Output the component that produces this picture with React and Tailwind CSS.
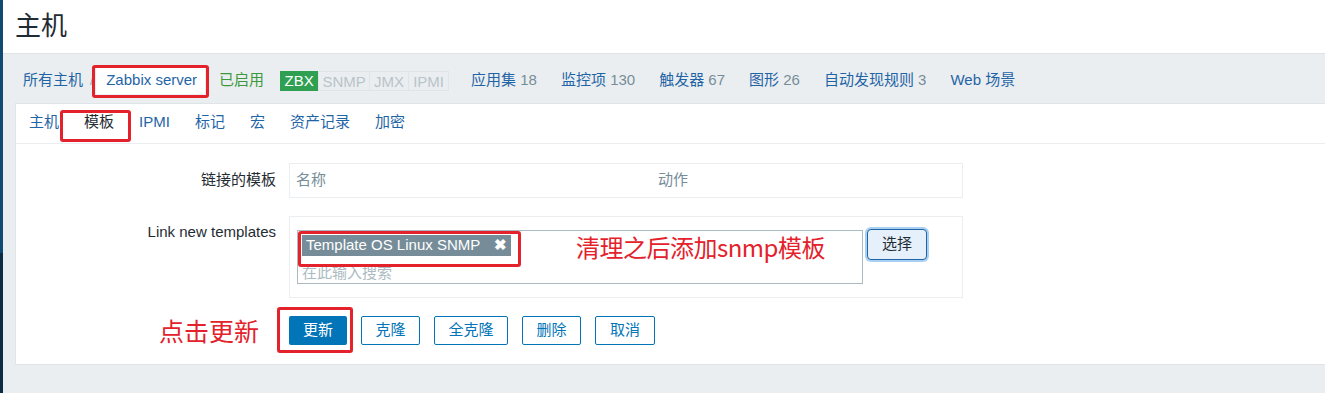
import React from "react";

const FONT = { fontFamily: '"Liberation Sans", Arial, "Noto Sans CJK SC", sans-serif' };

const counts = [
  { label: "应用集", n: "18" },
  { label: "监控项", n: "130" },
  { label: "触发器", n: "67" },
  { label: "图形", n: "26" },
  { label: "自动发现规则", n: "3" },
  { label: "Web 场景", n: null },
];

const tabs = ["主机", "模板", "IPMI", "标记", "宏", "资产记录", "加密"];

const RedBox = ({ className }) => (
  <div className={`absolute border-[3px] border-[#e3222b] rounded-[3px] pointer-events-none ${className}`} />
);

export default function App() {
  return (
    <div className="relative flex min-h-[393px] bg-[#ebeef0] text-[15px] overflow-hidden" style={FONT}>
      {/* sidebar edge */}
      <div className="w-[3px] flex flex-col shrink-0">
        <div className="h-[253px] bg-[#0f4a73]"></div>
        <div className="flex-1 bg-[#0b2c43]"></div>
      </div>

      <div className="flex-1 flex flex-col">
        {/* HEADER */}
        <div className="h-[54px] bg-white border-b border-[#dfe4e7] pl-3 flex items-center">
          <h1 className="text-[26px] leading-none text-[#1f2c33] pb-[2px]">主机</h1>
        </div>

        {/* BREADCRUMB */}
        <div className="h-[49px] pl-[20px] pt-[4px] flex items-center whitespace-nowrap">
          <span className="text-[#1f65a6]">所有主机</span>
          <span className="text-[#9aabb5] ml-[7px] mr-[2px]">/</span>
          <span className="bg-white text-[#1f65a6] h-[27px] pl-[10px] pr-[8px] flex items-center">Zabbix server</span>
          <span className="text-[#3c9a3c] ml-[14px]">已启用</span>
          <div className="flex ml-[16px] h-[20px] text-[15px] leading-[20px]">
            <span className="w-[38px] text-center bg-[#2f9f52] text-white">ZBX</span>
            <span className="w-[52px] text-center border border-[#dfe4e7] text-[#b8c4ca]">SNMP</span>
            <span className="w-[39px] text-center border border-l-0 border-[#dfe4e7] text-[#b8c4ca]">JMX</span>
            <span className="w-[40px] text-center border border-l-0 border-[#dfe4e7] text-[#b8c4ca]">IPMI</span>
          </div>
          <div className="flex gap-[24px] ml-[22px]">
            {counts.map((c) => (
              <span key={c.label} className="text-[#1f65a6]">
                {c.label}
                {c.n && <span className="text-[#768d99]"> {c.n}</span>}
              </span>
            ))}
          </div>
        </div>

        {/* CONTENT BOX */}
        <div className="ml-3 h-[262px] bg-white border border-r-0 border-[#dfe4e7]">
          {/* TABS */}
          <div className="h-[40px] border-b border-[#ebeef0] pl-[13px] flex items-center gap-[25px] pb-[2px]">
            {tabs.map((t) => (
              <span key={t} className={t === "模板" ? "text-[#1f2c33]" : "text-[#1f65a6]"}>
                {t}
              </span>
            ))}
          </div>

          {/* FORM */}
          <div className="pt-[19px] grid grid-cols-[260px_674px] gap-x-[13px] gap-y-[18px]">
            <div className="text-right text-[#1f2c33] pt-[6px]">链接的模板</div>
            <div className="h-[35px] border border-[#ebeef0] flex items-center pl-[6px] text-[#768d99]">
              <span className="w-[362px]">名称</span>
              <span>动作</span>
            </div>

            <div className="text-right text-[#1f2c33] pt-[5px]">Link new templates</div>
            <div className="h-[82px] border border-[#ebeef0] pl-[7px] pt-[13px] flex items-start gap-[4px]">
              <div className="w-[566px] h-[54px] border border-[#acbbc2] pl-[4px] pt-[3px]">
                <span className="inline-flex items-center h-[21px] bg-[#768d99] text-white px-[4px] gap-[14px]">
                  Template OS Linux SNMP
                  <span className="text-[15px] font-bold">✖</span>
                </span>
                <div className="text-[#acbbc2] leading-[20px] pt-[6px]">在此输入搜索</div>
              </div>
              <button className="mt-[-1px] w-[60px] h-[31px] rounded-[4px] bg-[#e5f0fa] border border-[#1f65a6] ring-2 ring-[#a9d0f2] text-[#1f2c33]">
                选择
              </button>
            </div>

            <div></div>
            <div className="flex gap-[14px]">
              <button className="w-[58px] h-[29px] rounded-[2px] bg-[#0275b8] text-white">更新</button>
              <button className="w-[59px] h-[29px] rounded-[2px] border border-[#0275b8] text-[#0275b8]">克隆</button>
              <button className="w-[74px] h-[29px] rounded-[2px] border border-[#0275b8] text-[#0275b8]">全克隆</button>
              <button className="w-[59px] h-[29px] rounded-[2px] border border-[#0275b8] text-[#0275b8]">删除</button>
              <button className="w-[60px] h-[29px] rounded-[2px] border border-[#0275b8] text-[#0275b8]">取消</button>
            </div>
          </div>
        </div>
      </div>

      {/* annotations */}
      <RedBox className="left-[92px] top-[65px] w-[117px] h-[33px]" />
      <RedBox className="left-[60px] top-[110px] w-[71px] h-[32px]" />
      <RedBox className="left-[298px] top-[231px] w-[223px] h-[36px]" />
      <RedBox className="left-[277px] top-[307px] w-[76px] h-[46px]" />
      <div className="absolute left-[576px] top-[231px] text-[24px] leading-[32px] tracking-[-0.5px] text-[#e3222b] whitespace-nowrap" style={{ fontFamily: '"Noto Sans CJK SC", sans-serif' }}>
        清理之后添加snmp模板
      </div>
      <div className="absolute left-[159px] top-[314px] text-[25px] leading-[32px] text-[#e3222b] whitespace-nowrap" style={{ fontFamily: '"Noto Sans CJK SC", sans-serif' }}>
        点击更新
      </div>
    </div>
  );
}
